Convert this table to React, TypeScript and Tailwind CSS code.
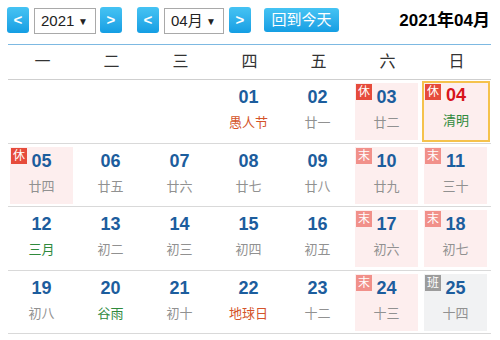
import React from "react";

type Day = {
  d: string;
  lunar: string;
  tone?: "green" | "orange";
  tag?: "休" | "末" | "班";
  today?: boolean;
};

const WEEK = ["一", "二", "三", "四", "五", "六", "日"];

const ROWS: (Day | null)[][] = [
  [
    null,
    null,
    null,
    { d: "01", lunar: "愚人节", tone: "orange" },
    { d: "02", lunar: "廿一" },
    { d: "03", lunar: "廿二", tag: "休" },
    { d: "04", lunar: "清明", tone: "green", tag: "休", today: true },
  ],
  [
    { d: "05", lunar: "廿四", tag: "休" },
    { d: "06", lunar: "廿五" },
    { d: "07", lunar: "廿六" },
    { d: "08", lunar: "廿七" },
    { d: "09", lunar: "廿八" },
    { d: "10", lunar: "廿九", tag: "末" },
    { d: "11", lunar: "三十", tag: "末" },
  ],
  [
    { d: "12", lunar: "三月", tone: "green" },
    { d: "13", lunar: "初二" },
    { d: "14", lunar: "初三" },
    { d: "15", lunar: "初四" },
    { d: "16", lunar: "初五" },
    { d: "17", lunar: "初六", tag: "末" },
    { d: "18", lunar: "初七", tag: "末" },
  ],
  [
    { d: "19", lunar: "初八" },
    { d: "20", lunar: "谷雨", tone: "green" },
    { d: "21", lunar: "初十" },
    { d: "22", lunar: "地球日", tone: "orange" },
    { d: "23", lunar: "十二" },
    { d: "24", lunar: "十三", tag: "末" },
    { d: "25", lunar: "十四", tag: "班" },
  ],
];

function NavBtn({ label }: { label: string }) {
  return (
    <div className="w-[22px] h-[26px] rounded-[3px] bg-gradient-to-b from-[#45c3f3] to-[#139ee3] text-white text-[15px] font-bold leading-[26px] text-center">
      {label}
    </div>
  );
}

function FakeSelect({ text, w }: { text: string; w: string }) {
  return (
    <div className={`${w} h-[26px] border border-[#a9a9a9] bg-white flex items-center justify-between pl-[6px] pr-[7px] text-[15px] text-[#222]`}>
      <span>{text}</span>
      <span className="text-[10px]">▼</span>
    </div>
  );
}

function Cell({ day }: { day: Day | null }) {
  if (!day) return <div />;

  const tagCls =
    day.tag === "休" ? "bg-[#e64b3b]" : day.tag === "末" ? "bg-[#f1908a]" : "bg-[#9c9c9c]";
  const lunarCls =
    day.tone === "green" ? "text-[#2f8a3c]" : day.tone === "orange" ? "text-[#d4532a]" : "text-[#919191]";

  let boxCls = "mt-[3px] ml-[2px] w-[63px] h-[57px]";
  if (day.today) boxCls = "mt-[1px] w-[68px] h-[61px] border-2 border-[#f5c24c] bg-[#fdeeee]";
  else if (day.tag === "班") boxCls += " bg-[#f1f2f3]";
  else if (day.tag) boxCls += " bg-[#fdeeee]";

  return (
    <div>
      <div className={`relative flex flex-col items-center ${boxCls}`}>
        {day.tag && (
          <div className={`absolute top-[1px] left-[1px] w-[16px] h-[16px] text-white text-[12px] leading-[16px] text-center ${tagCls}`}>
            {day.tag}
          </div>
        )}
        <div className={`${day.today ? "pt-[1px]" : "pt-[3px]"} text-[18px] leading-[22px] font-bold ${day.today ? "text-[#d8141c]" : "text-[#1c5d9d]"}`}>
          {day.d}
        </div>
        <div className={`mt-[6px] text-[13px] leading-[18px] ${lunarCls}`}>{day.lunar}</div>
      </div>
    </div>
  );
}

export default function App() {
  return (
    <div
      className="w-[500px] h-[340px] bg-white overflow-hidden"
      style={{ fontFamily: '"Liberation Sans", Arial, "Noto Sans CJK SC", sans-serif' }}
    >
      <div className="h-[44px] flex items-start pt-[7px] pl-[7px]">
        <NavBtn label="<" />
        <div className="ml-[5px] mt-[1px]">
          <FakeSelect text="2021" w="w-[62px]" />
        </div>
        <div className="ml-[4px]">
          <NavBtn label=">" />
        </div>
        <div className="ml-[15px]">
          <NavBtn label="<" />
        </div>
        <div className="ml-[5px] mt-[1px]">
          <FakeSelect text="04月" w="w-[60px]" />
        </div>
        <div className="ml-[5px]">
          <NavBtn label=">" />
        </div>
        <div className="ml-[13px] mt-[1px] h-[24px] w-[75px] rounded-[3px] bg-gradient-to-b from-[#45c3f3] to-[#139ee3] text-white text-[15px] leading-[24px] text-center">
          回到今天
        </div>
        <div className="ml-auto mr-[10px] mt-[1px] text-[17px] leading-[26px] font-bold text-black">
          2021年04月
        </div>
      </div>

      <div className="ml-[8px] w-[483px] border-t border-[#7db9e2]">
        <div className="grid grid-cols-7 h-[35px] border-b border-[#cfcfcf]">
          {WEEK.map((w) => (
            <div key={w} className="flex items-center justify-center text-[16px] text-[#333]">
              {w}
            </div>
          ))}
        </div>
        {ROWS.map((row, i) => (
          <div key={i} className="grid grid-cols-7 h-[63.5px] border-b border-[#d9d9d9]">
            {row.map((day, j) => (
              <Cell key={j} day={day} />
            ))}
          </div>
        ))}
      </div>
    </div>
  );
}
